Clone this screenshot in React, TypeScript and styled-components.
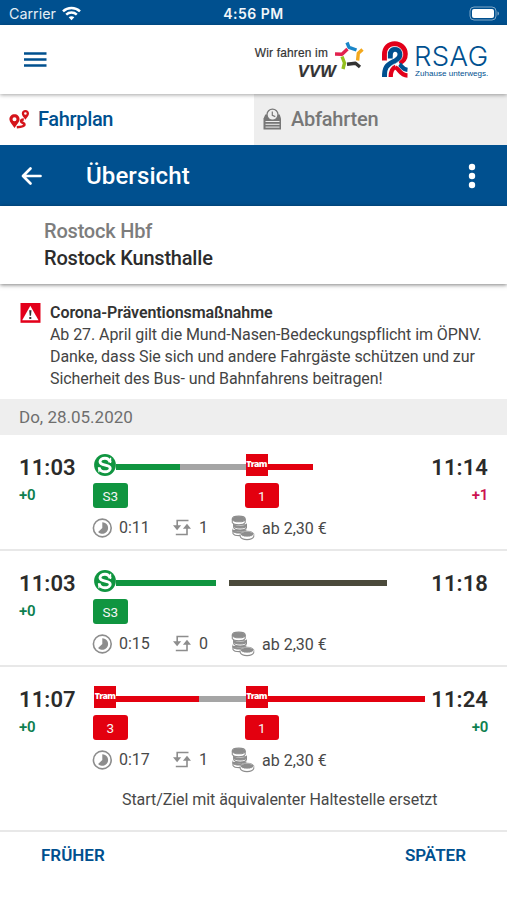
import React from "react";
import styled, { createGlobalStyle } from "styled-components";

const blue = "#00508f";
const green = "#109540";
const red = "#e3000f";
const grey = "#a5a5a5";
const dark = "#4b4a3b";

const Global = createGlobalStyle`
  *, *::before, *::after { box-sizing: border-box; }
  html, body { margin: 0; padding: 0; background: #fff; }
  body { font-family: Roboto, "Noto Sans", sans-serif; color: #2f2f2f; overflow: hidden; }
`;

const Screen = styled.main`
  width: 507px;
  height: 900px;
  display: flex;
  flex-direction: column;
  background: #fff;
  white-space: nowrap;
`;

const StatusBar = styled.div`
  height: 25px;
  flex: none;
  display: grid;
  grid-template-columns: 1fr auto 1fr;
  align-items: center;
  padding: 2px 8px 0 8px;
  background: ${blue};
  color: #e4edf5;
  font: 400 14.3px/22px Inter, sans-serif;
`;
const Carrier = styled.div`
  display: flex;
  align-items: center;
  gap: 6px;
  padding-left: 1px;
`;
const Clock = styled.div`
  color: #f2f6fa;
  font-size: 14px;
  font-weight: 600;
  letter-spacing: 0.5px;
`;
const BatterySlot = styled.div`
  display: flex;
  justify-content: flex-end;
`;

const Header = styled.header`
  height: 69px;
  flex: none;
  display: flex;
  align-items: center;
  padding: 0 17px 0 24px;
  background: #fff;
  box-shadow: 0 1px 4px rgba(0, 0, 0, 0.36);
  position: relative;
`;
const Spacer = styled.div`
  flex: 1;
`;
const Partner = styled.div`
  display: flex;
  align-items: flex-start;
  height: 38px;
  margin-right: 18px;
`;
const PartnerText = styled.div`
  display: flex;
  flex-direction: column;
  color: #333;
  font: 400 11.9px/14px "Liberation Sans", sans-serif;
  letter-spacing: 0.2px;
  padding-top: 5px;
  margin-right: 7px;
  -webkit-text-stroke: 0.2px #333;
`;
const PartnerName = styled.span`
  align-self: flex-end;
  font: italic 700 16.5px/18px "Liberation Sans", sans-serif;
  margin: 2px -8px 0 0;
`;
const Operator = styled.div`
  display: flex;
  align-items: flex-start;
  height: 38px;
  color: ${blue};
`;
const OperatorText = styled.div`
  display: flex;
  flex-direction: column;
  width: 75px;
  margin-left: 4px;
`;
const OperatorName = styled.span`
  font: 300 27.5px/27px Inter, sans-serif;
  letter-spacing: 0.4px;
  margin: 2px 0 0 -1px;
`;
const OperatorClaim = styled.span`
  font: 400 8.1px/9px "Liberation Sans", sans-serif;
  margin: -1px 0 0 0;
`;

const Tabs = styled.nav`
  height: 51px;
  flex: none;
  display: grid;
  grid-template-columns: 254px 1fr;
`;
const Tab = styled.div<{ $active?: boolean }>`
  display: flex;
  align-items: center;
  gap: ${(p) => (p.$active ? 8 : 9)}px;
  padding: 0 9px 1px;
  background: ${(p) => (p.$active ? "#fff" : "#eee")};
  color: ${(p) => (p.$active ? blue : "#777")};
  font-size: 20px;
  font-weight: 500;
  letter-spacing: ${(p) => (p.$active ? "-0.35px" : "-0.25px")};
`;

const TitleBar = styled.div`
  height: 61px;
  flex: none;
  display: flex;
  align-items: center;
  padding: 0 31px 0 21px;
  background: ${blue};
  color: #fff;
`;
const Title = styled.h1`
  margin: 0 0 0 44px;
  font-size: 24px;
  font-weight: 500;
  line-height: 32px;
  letter-spacing: 0.1px;
`;

const Route = styled.section`
  height: 78px;
  flex: none;
  padding: 12px 0 0 44px;
  font-size: 20px;
  font-weight: 500;
  line-height: 27px;
  letter-spacing: -0.2px;
  background: #fff;
  box-shadow: 0 1px 4px rgba(0, 0, 0, 0.5);
  position: relative;
`;
const Stop = styled.div<{ $muted?: boolean }>`
  color: ${(p) => (p.$muted ? "#7d7d7d" : "#2c2c2c")};
`;

const Notice = styled.section`
  height: 115px;
  flex: none;
  display: flex;
  gap: 9px;
  padding: 18px 0 0 20px;
  color: #444;
  font-size: 16px;
  line-height: 22px;
  letter-spacing: -0.07px;
`;
const NoticeIcon = styled.div`
  padding-top: 1px;
`;
const NoticeTitle = styled.div`
  font-weight: 600;
  color: #333;
`;

const DateBar = styled.div`
  height: 36px;
  flex: none;
  padding-left: 19px;
  background: #eee;
  color: #6e6e6e;
  font-size: 17px;
  line-height: 36px;
`;

const TripRow = styled.article<{ $h: number }>`
  height: ${(p) => p.$h}px;
  flex: none;
  display: grid;
  grid-template-columns: 74px 332px 1fr;
  padding: 19px 19px 0 19px;
  border-bottom: 2px solid #e8e8e8;
`;
const Times = styled.div<{ $end?: boolean }>`
  display: flex;
  flex-direction: column;
  align-items: ${(p) => (p.$end ? "flex-end" : "flex-start")};
  padding-top: 1px;
`;
const Time = styled.span`
  font-size: 22px;
  font-weight: 600;
  line-height: 26px;
  letter-spacing: 0.1px;
  color: #2b2b2b;
`;
const Delay = styled.span<{ $late?: boolean }>`
  margin-top: 5px;
  font-size: 15px;
  font-weight: 600;
  line-height: 18px;
  letter-spacing: -0.3px;
  color: ${(p) => (p.$late ? "#cc1250" : "#0e8050")};
`;
const Track = styled.div`
  display: flex;
  align-items: center;
  height: 22px;
  padding-left: 1px;
`;
const Segment = styled.div<{ $w: number; $c: string }>`
  width: ${(p) => p.$w}px;
  height: 6px;
  margin-top: 4px;
  background: ${(p) => p.$c};
`;
const TramSign = styled.div`
  width: 22px;
  height: 22px;
  background: ${red};
  color: #fff;
  font: 800 8.7px/20px "Open Sans", sans-serif;
  text-align: center;
  letter-spacing: -0.7px;
`;
const Lines = styled.div`
  display: flex;
  gap: 117px;
  margin-top: 7px;
`;
const LineBadge = styled.span<{ $c: string }>`
  width: 34.5px;
  height: 25px;
  border-radius: 3px;
  background: ${(p) => p.$c};
  color: #f6f6f6;
  font-size: 13.5px;
  line-height: 26px;
  text-align: center;
`;
const Facts = styled.div`
  display: grid;
  grid-template-columns: 81px 58px auto;
  align-items: center;
  height: 25px;
  margin: 6px 0 0 -1px;
  color: #484848;
  font-size: 16px;
`;
const Fact = styled.div<{ $gap: number; $drop?: boolean }>`
  display: flex;
  align-items: center;
  gap: ${(p) => p.$gap}px;
  padding-top: ${(p) => (p.$drop ? 1 : 0)}px;
`;
const Remark = styled.div`
  margin: 19px 0 0 29px;
  font-size: 16px;
  line-height: 20px;
  letter-spacing: -0.06px;
  color: #484848;
`;

const Pager = styled.footer`
  display: flex;
  justify-content: space-between;
  padding: 12px 41px 0;
`;
const PagerButton = styled.button`
  border: 0;
  padding: 0;
  background: none;
  color: ${blue};
  font: 600 17px/22px Roboto, sans-serif;
`;

const Wifi = () => (
  <svg width="19" height="15" viewBox="0 0 19 15" fill="none" stroke="#fff" strokeWidth="2.5">
    <path d="M1 5.3C5.7.8 13.3.8 18 5.3" />
    <path d="M4.2 8.6c3-2.8 7.600-2.800 10.600 0" />
    <path d="M9.500 14.200 6.700 11.200c1.600-1.400 4-1.400 5.600 0z" fill="#fff" stroke="none" />
  </svg>
);
const Battery = () => (
  <svg width="31" height="15" viewBox="0 0 31 15">
    <rect x="2" y="1" width="26" height="13" rx="4" fill="none" stroke="#7fa7c7" />
    <rect x="4" y="3" width="22" height="9" rx="2" fill="#fff" />
    <path d="M29.500 5.500c2 .8 2 3.200 0 4z" fill="#7fa7c7" />
  </svg>
);
const Burger = () => (
  <svg width="23" height="17" viewBox="0 0 23 17" stroke={blue} strokeWidth="2.500">
    <path d="M0 2.500h22.500M0 8.500h22.500M0 14.500h22.500" />
  </svg>
);
const VvwStar = () => (
  <svg width="29" height="30" viewBox="0 0 29 30" fill="none" strokeWidth="3.400" strokeLinejoin="round">
    <path d="M12 1.500 14 6.300 21.500 9" stroke="#1a86c8" />
    <path d="M0 13 7 13.300 12.500 8" stroke="#e2224e" />
    <path d="M27.500 8.500 23.300 12.300 22.600 19.500" stroke="#f3a81c" />
    <path d="M8 28 9.500 22 7 15.500" stroke="#93c01f" />
    <path d="M25 26 20.500 22.300 12 23.300" stroke="#333" />
  </svg>
);
const RsagMark = () => (
  <svg width="29" height="37" viewBox="1 0 29 37" fill="none">
    <path d="M3.500 19.500V13.500C3.500 6.500 8 2.700 13.700 2.700S24.300 7 24.300 13c0 4.500-2.300 7.300-6 9" stroke="#e2001a" strokeWidth="5" />
    <path d="M9.300 17.500v-3.200c0-4 1.700-6 4.700-6 3.200 0 5 2.200 5 5.200 0 4-3.300 5.500-7.200 7.500C5.500 24.200 3.500 27 3.500 36" stroke="#00508f" strokeWidth="5" />
    <path d="M9.700 36c0-6 1.300-8.700 5-10.200" stroke="#e2001a" strokeWidth="4.300" />
    <path d="M14.500 26.500c3.800 1 4.500 7.800 12 8" stroke="#e2001a" strokeWidth="4.300" />
    <path d="M18.500 23.300c2 1.300 3 5 8 5.500" stroke="#00508f" strokeWidth="4.300" />
    <path d="M6.500 36c0-8 1.500-10.500 7.200-13.300M6.300 19.500V13.500c0-5 3-7.900 7.500-7.900s8 3 8 7.900c0 4-2.300 6.200-6.300 8.200" stroke="#fff" strokeWidth=".5" />
    <path d="M12.500 17.500c0-2.500.5-4 2.300-4" stroke="#fff" strokeWidth="1.400" />
  </svg>
);
const RouteIcon = () => (
  <svg width="21" height="19" viewBox="0 0 21 19">
    <path fillRule="evenodd" fill="#d5141b" d="M5.500 4.200c3 0 5.100 2.100 5.100 5 0 2.500-2.800 5.300-5.100 8.800C3.200 14.500.4 11.700.4 9.200c0-2.900 2.100-5 5.100-5zm0 3a2 2 0 1 0 0 4 2 2 0 0 0 0-4z" />
    <path fillRule="evenodd" fill="#d5141b" d="M16.400 0c2.100 0 3.600 1.500 3.600 3.500 0 1.900-1.900 3.900-3.600 6.200-1.700-2.300-3.600-4.300-3.600-6.200C12.800 1.500 14.300 0 16.400 0zm0 2.200a1.300 1.300 0 1 0 0 2.600 1.300 1.300 0 0 0 0-2.600z" />
    <path fill="none" stroke="#d5141b" strokeWidth="2.600" d="M14.800 9.500c-2.300 0-3.300 1-2.500 2.300.7 1.100 3.500 1 3.200 3.100-.2 1.500-3.700 2-7.700 2.300" />
  </svg>
);
const BoardIcon = () => (
  <svg width="19" height="22" viewBox="0 0 19 22">
    <path d="M2.300 6.500h14.400l1.300 4v11H.5v-11z" fill="#777" />
    <circle cx="9.500" cy="6.700" r="5.500" fill="#eee" stroke="#777" strokeWidth="1.300" />
    <path d="M9.300 3.500v3.800l3 1.300" fill="none" stroke="#777" strokeWidth="1.200" />
    <path d="M1 12h16.500v1H1z" fill="#777" />
    <path d="M2.500 13.500h14M2.500 16.300h14M2.500 19.100h14" stroke="#eee" strokeWidth="1" />
  </svg>
);
const BackArrow = () => (
  <svg width="21" height="20" viewBox="0 0 21 20" fill="none" stroke="#fff" strokeWidth="2.700" strokeLinecap="round" strokeLinejoin="round">
    <path d="M19.500 10H2M9.500 2.500 2 10l7.500 7.500" />
  </svg>
);
const MoreDots = () => (
  <svg width="8" height="26" viewBox="0 0 8 26" fill="#fff">
    <circle cx="4" cy="4" r="3.200" />
    <circle cx="4" cy="13" r="3.200" />
    <circle cx="4" cy="22" r="3.200" />
  </svg>
);
const Warning = () => (
  <svg width="21" height="21" viewBox="0 0 21 21">
    <path d="M.5 0h20v19.800H.5z" fill="#e3001b" />
    <path d="M10.300 2.800 18.500 17.300h-16.300z" fill="#fff" />
    <path d="M9.200 7.300h2.300l-.5 5.500H9.700zM9.300 14h2v2h-2z" fill="#333" />
  </svg>
);
const SBahn = () => (
  <svg width="22" height="22" viewBox="0 0 22 22">
    <circle cx="11" cy="11" r="10.900" fill={green} />
    <path d="M16.200 8.300C15.300 5.400 13.500 4.200 10.900 4.200 8.300 4.200 6 5.500 6 7.700c0 4.400 10.200 2.400 10.200 6.500 0 2.300-2.400 3.600-5.200 3.600-3.200 0-5.200-1.400-5.900-4.300" fill="none" stroke="#fff" strokeWidth="2.900" />
    <path d="M16.600 3.800v5.300M4.900 13v5.200" stroke="#fff" strokeWidth="1.200" />
  </svg>
);
const Duration = () => (
  <svg width="20" height="20" viewBox="0 0 20 20">
    <circle cx="10.300" cy="10" r="8.900" fill="none" stroke="#8d8d8d" strokeWidth="1.600" />
    <path d="M10.300 4.200a5.800 5.800 0 1 1-4.200 9.800L10.300 10z" fill="#8d8d8d" />
  </svg>
);
const Changes = () => (
  <svg width="18" height="17" viewBox="0 0 18 17" fill="none" stroke="#8d8d8d" strokeWidth="1.600">
    <path d="M15.500 1.500H4.200v6.500M2.800 15.500h11.200V8.500" />
    <path d="M0 6.300h8.200L4.100 11.300zM9.900 9.800h8.100L14 4.800z" fill="#8d8d8d" stroke="none" />
  </svg>
);
const Coins = () => (
  <svg width="23.500" height="26" viewBox="0 0 24 26" fill="#fff" stroke="#8d8d8d" strokeWidth="1.100">
    <path d="M2 15.500v3c1.500 3 11.500 3 13 0v-3z" />
    <path d="M2 15c2 2.600 11 2.600 13 0v1.300c-2 2.500-11 2.500-13 0z" fill="#8d8d8d" />
    <path d="M2.800 9.800v3c1.500 3 11.500 3 13 0v-3z" />
    <path d="M2.800 9.500c2 2.600 11 2.600 13 0v1.500c-2 2.500-11 2.500-13 0z" fill="#8d8d8d" />
    <path d="M1.300 4v3.500c1.500 3 11.700 3 13.200 0V4z" />
    <ellipse cx="7.900" cy="3.800" rx="6.600" ry="2.900" fill="#8d8d8d" />
    <path d="M9.500 19.500v2.500c1.500 3.800 12.200 3.800 13.700 0v-2.500z" />
    <ellipse cx="16.400" cy="19.300" rx="6.900" ry="3" fill="#8d8d8d" stroke="#fff" strokeWidth=".9" />
    <path d="M9.500 19.500c0-4.300 13.700-4.300 13.700 0" fill="none" strokeWidth=".8" />
  </svg>
);

type Part =
  | { kind: "sbahn" }
  | { kind: "tram" }
  | { kind: "leg"; width: number; color: string };

interface Trip {
  start: string;
  startDelay: string;
  end: string;
  endDelay: string;
  parts: Part[];
  lines: { label: string; color: string }[];
  duration: string;
  changes: string;
  remark?: string;
  height: number;
}

const leg = (width: number, color: string): Part => ({ kind: "leg", width, color });

const trips: Trip[] = [
  {
    start: "11:03", startDelay: "+0", end: "11:14", endDelay: "+1",
    parts: [{ kind: "sbahn" }, leg(64, green), leg(65.5, grey), { kind: "tram" }, leg(45.5, red)],
    lines: [{ label: "S3", color: green }, { label: "1", color: red }],
    duration: "0:11", changes: "1", height: 116,
  },
  {
    start: "11:03", startDelay: "+0", end: "11:18", endDelay: "",
    parts: [{ kind: "sbahn" }, leg(100, green), leg(12.5, "transparent"), leg(158, dark)],
    lines: [{ label: "S3", color: green }],
    duration: "0:15", changes: "0", height: 116,
  },
  {
    start: "11:07", startDelay: "+0", end: "11:24", endDelay: "+0",
    parts: [{ kind: "tram" }, leg(83, red), leg(46.5, grey), { kind: "tram" }, leg(157.5, red)],
    lines: [{ label: "3", color: red }, { label: "1", color: red }],
    duration: "0:17", changes: "1", remark: "Start/Ziel mit äquivalenter Haltestelle ersetzt",
    height: 165,
  },
];

const TripView = ({ trip }: { trip: Trip }) => (
  <TripRow $h={trip.height}>
    <Times>
      <Time>{trip.start}</Time>
      <Delay>{trip.startDelay}</Delay>
    </Times>
    <div>
      <Track>
        {trip.parts.map((part, i) => {
          if (part.kind === "sbahn") return <SBahn key={i} />;
          if (part.kind === "tram") return <TramSign key={i}>Tram</TramSign>;
          return <Segment key={i} $w={part.width} $c={part.color} />;
        })}
      </Track>
      <Lines>
        {trip.lines.map((line) => (
          <LineBadge key={line.label} $c={line.color}>{line.label}</LineBadge>
        ))}
      </Lines>
      <Facts>
        <Fact $gap={7}><Duration />{trip.duration}</Fact>
        <Fact $gap={8}><Changes />{trip.changes}</Fact>
        <Fact $gap={7.5} $drop><Coins />ab 2,30 €</Fact>
      </Facts>
      {trip.remark && <Remark>{trip.remark}</Remark>}
    </div>
    <Times $end>
      <Time>{trip.end}</Time>
      <Delay $late={trip.endDelay === "+1"}>{trip.endDelay}</Delay>
    </Times>
  </TripRow>
);

export default function App() {
  return (
    <>
      <Global />
      <Screen>
        <StatusBar>
          <Carrier>Carrier<Wifi /></Carrier>
          <Clock>4:56 PM</Clock>
          <BatterySlot><Battery /></BatterySlot>
        </StatusBar>
        <Header>
          <Burger />
          <Spacer />
          <Partner>
            <PartnerText>
              Wir fahren im
              <PartnerName>VVW</PartnerName>
            </PartnerText>
            <VvwStar />
          </Partner>
          <Operator>
            <RsagMark />
            <OperatorText>
              <OperatorName>RSAG</OperatorName>
              <OperatorClaim>Zuhause unterwegs.</OperatorClaim>
            </OperatorText>
          </Operator>
        </Header>
        <Tabs>
          <Tab $active><RouteIcon />Fahrplan</Tab>
          <Tab><BoardIcon />Abfahrten</Tab>
        </Tabs>
        <TitleBar>
          <BackArrow />
          <Title>Übersicht</Title>
          <Spacer />
          <MoreDots />
        </TitleBar>
        <Route>
          <Stop $muted>Rostock Hbf</Stop>
          <Stop>Rostock Kunsthalle</Stop>
        </Route>
        <Notice>
          <NoticeIcon><Warning /></NoticeIcon>
          <div>
            <NoticeTitle>Corona-Präventionsmaßnahme</NoticeTitle>
            <div>Ab 27. April gilt die Mund-Nasen-Bedeckungspflicht im ÖPNV.</div>
            <div>Danke, dass Sie sich und andere Fahrgäste schützen und zur</div>
            <div>Sicherheit des Bus- und Bahnfahrens beitragen!</div>
          </div>
        </Notice>
        <DateBar>Do, 28.05.2020</DateBar>
        {trips.map((trip) => (
          <TripView key={trip.end} trip={trip} />
        ))}
        <Pager>
          <PagerButton>FRÜHER</PagerButton>
          <PagerButton>SPÄTER</PagerButton>
        </Pager>
      </Screen>
    </>
  );
}
